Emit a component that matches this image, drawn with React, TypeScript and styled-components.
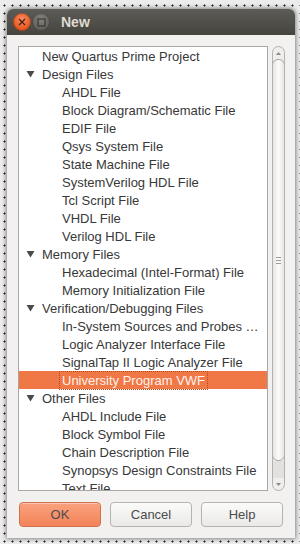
import styled, { createGlobalStyle } from 'styled-components';

const GlobalStyle = createGlobalStyle`
  html, body {
    margin: 0;
    padding: 0;
  }
  body {
    font-family: 'Liberation Sans', Arial, sans-serif;
  }
`;

const Desktop = styled.div`
  width: 300px;
  height: 544px;
  box-sizing: border-box;
  padding: 9px 5px 6px 7px;
  background-color: #ececec;
  background-image: radial-gradient(circle at 4.5px 4.5px, #111 0.9px, transparent 1.1px);
  background-size: 8px 8px;
  background-position: 0 1px;
  overflow: hidden;
`;

const Window = styled.div`
  height: 100%;
  display: flex;
  flex-direction: column;
  background: #f2f1f0;
  border-radius: 6px 6px 0 0;
  box-shadow: 0 0 4px 1px rgba(0, 0, 0, 0.45);
`;

const TitleBar = styled.div`
  height: 26px;
  flex-shrink: 0;
  display: flex;
  align-items: center;
  padding-left: 6px;
  gap: 1px;
  border-radius: 6px 6px 0 0;
  background: linear-gradient(#5c5b55, #45443e);
`;

const WinButton = styled.div<{ $kind: 'close' | 'min' }>`
  width: 18px;
  height: 18px;
  border-radius: 50%;
  display: flex;
  align-items: center;
  justify-content: center;
  background: ${(p) =>
    p.$kind === 'close'
      ? 'radial-gradient(circle at 50% 35%, #f98b5e, #e2561f 70%)'
      : 'radial-gradient(circle at 50% 35%, #85847e, #605f5a 70%)'};
  box-shadow: inset 0 0 0 1px rgba(0, 0, 0, 0.25);
`;

const Title = styled.span`
  margin-left: 10px;
  font-size: 14px;
  font-weight: bold;
  color: #dfdbd2;
`;

const Body = styled.div`
  flex: 1;
  display: flex;
  flex-direction: column;
  padding: 11px 10px 11px 11px;
  min-height: 0;
`;

const ListArea = styled.div`
  flex: 1;
  display: flex;
  gap: 4px;
  min-height: 0;
`;

const ListBox = styled.div`
  width: 250px;
  box-sizing: border-box;
  border: 1px solid #a9a7a3;
  background: #fff;
  overflow: hidden;
`;

const Row = styled.div<{ $level: number; $selected?: boolean }>`
  height: 18px;
  display: flex;
  align-items: center;
  padding-left: ${(p) => 7 + p.$level * 20}px;
  padding-right: 4px;
  background: ${(p) => (p.$selected ? '#f07746' : 'transparent')};
  color: ${(p) => (p.$selected ? '#fff3ec' : '#383838')};
  font-size: 13px;
  white-space: nowrap;
`;

const Arrow = styled.span`
  width: 14px;
  flex-shrink: 0;
  display: flex;
  align-items: center;
`;

const Label = styled.span<{ $focus?: boolean }>`
  overflow: hidden;
  text-overflow: ellipsis;
  padding: 1px 2px;
  outline: ${(p) => (p.$focus ? '1px dotted #b24a1f' : 'none')};
`;

const Scrollbar = styled.div`
  width: 13px;
  box-sizing: border-box;
  display: flex;
  flex-direction: column;
  border: 1px solid #b3b1ad;
  border-radius: 7px;
  background: #efeeec;
  overflow: hidden;
`;

const Stepper = styled.div`
  height: 12px;
  flex-shrink: 0;
  display: flex;
  align-items: center;
  justify-content: center;
`;

const Thumb = styled.div`
  flex: 1;
  display: flex;
  align-items: center;
  justify-content: center;
  border: 1px solid #a8a6a2;
  border-radius: 6px;
  margin: 0 -1px;
  background: linear-gradient(90deg, #e6e5e3, #fbfbfa 50%, #e6e5e3);
`;

const Trough = styled.div`
  height: 17px;
  flex-shrink: 0;
  background: #e2e1df;
`;

const Buttons = styled.div`
  display: flex;
  gap: 9px;
  margin-top: 11px;
  padding-left: 1px;
`;

const Button = styled.button<{ $primary?: boolean }>`
  width: 82px;
  height: 25px;
  box-sizing: border-box;
  border-radius: 4px;
  font-family: 'Liberation Sans', Arial, sans-serif;
  font-size: 13px;
  color: #4c4c4c;
  border: 1px solid ${(p) => (p.$primary ? '#d0714c' : '#b5b3af')};
  background: ${(p) =>
    p.$primary ? 'linear-gradient(#f9a27e, #f3835a)' : 'linear-gradient(#fbfbfa, #eae9e7)'};
  box-shadow: inset 0 1px 0 rgba(255, 255, 255, 0.4);
  padding: 0;
`;

type Item = { label: string; level: number; group?: boolean; selected?: boolean };

const items: Item[] = [
  { label: 'New Quartus Prime Project', level: 0 },
  { label: 'Design Files', level: 0, group: true },
  { label: 'AHDL File', level: 1 },
  { label: 'Block Diagram/Schematic File', level: 1 },
  { label: 'EDIF File', level: 1 },
  { label: 'Qsys System File', level: 1 },
  { label: 'State Machine File', level: 1 },
  { label: 'SystemVerilog HDL File', level: 1 },
  { label: 'Tcl Script File', level: 1 },
  { label: 'VHDL File', level: 1 },
  { label: 'Verilog HDL File', level: 1 },
  { label: 'Memory Files', level: 0, group: true },
  { label: 'Hexadecimal (Intel-Format) File', level: 1 },
  { label: 'Memory Initialization File', level: 1 },
  { label: 'Verification/Debugging Files', level: 0, group: true },
  { label: 'In-System Sources and Probes Editor File', level: 1 },
  { label: 'Logic Analyzer Interface File', level: 1 },
  { label: 'SignalTap II Logic Analyzer File', level: 1 },
  { label: 'University Program VWF', level: 1, selected: true },
  { label: 'Other Files', level: 0, group: true },
  { label: 'AHDL Include File', level: 1 },
  { label: 'Block Symbol File', level: 1 },
  { label: 'Chain Description File', level: 1 },
  { label: 'Synopsys Design Constraints File', level: 1 },
  { label: 'Text File', level: 1 },
];

const Triangle = () => (
  <svg width="9" height="8" viewBox="0 0 9 8">
    <path d="M0.5 1 L8.5 1 L4.5 7.5 Z" fill="#4a4a48" />
  </svg>
);

export default function App() {
  return (
    <Desktop>
      <GlobalStyle />
      <Window>
        <TitleBar>
          <WinButton $kind="close">
            <svg width="8" height="8" viewBox="0 0 8 8">
              <path d="M1 1 L7 7 M7 1 L1 7" stroke="#4a2010" strokeWidth="1.3" />
            </svg>
          </WinButton>
          <WinButton $kind="min">
            <svg width="9" height="9" viewBox="0 0 9 9">
              <rect x="1" y="1" width="7" height="7" fill="none" stroke="#38372f" strokeWidth="1.2" />
            </svg>
          </WinButton>
          <Title>New</Title>
        </TitleBar>
        <Body>
          <ListArea>
            <ListBox>
              {items.map((it) => (
                <Row key={it.label} $level={it.level} $selected={it.selected}>
                  <Arrow>{it.group && <Triangle />}</Arrow>
                  <Label $focus={it.selected}>{it.label}</Label>
                </Row>
              ))}
            </ListBox>
            <Scrollbar>
              <Stepper>
                <svg width="5" height="3" viewBox="0 0 5 3">
                  <path d="M0 3 L2.5 0 L5 3 Z" fill="#8a8985" />
                </svg>
              </Stepper>
              <Thumb>
                <svg width="5" height="7" viewBox="0 0 5 7">
                  <path d="M0 0.5 H5 M0 3.5 H5 M0 6.5 H5" stroke="#9d9c98" strokeWidth="1" />
                </svg>
              </Thumb>
              <Trough />
              <Stepper>
                <svg width="5" height="3" viewBox="0 0 5 3">
                  <path d="M0 0 L2.5 3 L5 0 Z" fill="#8a8985" />
                </svg>
              </Stepper>
            </Scrollbar>
          </ListArea>
          <Buttons>
            <Button $primary>OK</Button>
            <Button>Cancel</Button>
            <Button>Help</Button>
          </Buttons>
        </Body>
      </Window>
    </Desktop>
  );
}
